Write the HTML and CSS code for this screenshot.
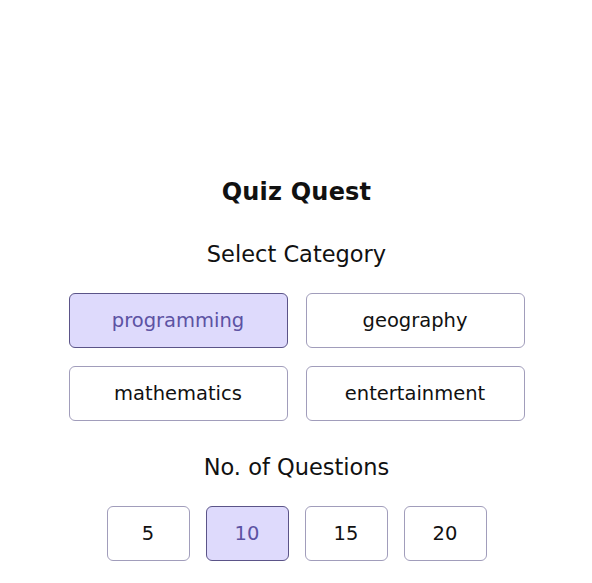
FILE: index.html
```html
<!DOCTYPE html>
<html>
<head>
<meta charset="utf-8">
<link rel="stylesheet" href="styles.css">
</head>
<body>
<main class="app">
  <h1 class="title">Quiz Quest</h1>
  <h2 class="subtitle">Select Category</h2>
  <div class="categories">
    <button class="opt selected">programming</button>
    <button class="opt">geography</button>
    <button class="opt">mathematics</button>
    <button class="opt">entertainment</button>
  </div>
  <h2 class="subtitle sub2">No. of Questions</h2>
  <div class="counts">
    <button class="opt num">5</button>
    <button class="opt num selected">10</button>
    <button class="opt num">15</button>
    <button class="opt num">20</button>
  </div>
</main>
</body>
</html>
```
FILE: styles.css
```css
html, body { margin: 0; padding: 0; background: #fff; }
body { font-family: "DejaVu Sans", "Noto Sans", sans-serif; color: #111; }
.app { display: flex; flex-direction: column; align-items: center; padding-top: 176px; padding-left: 1px; }
.title { margin: 0; font-size: 24px; font-weight: 700; line-height: 32px; letter-spacing: 0.2px; }
.subtitle { margin: 32px 0 0; font-size: 22.5px; font-weight: 400; line-height: 28px; }
.categories { margin-top: 25px; display: grid; grid-template-columns: 219px 219px; gap: 18px; }
.opt { height: 55px; border: 1px solid #a19dbb; border-radius: 6px; background: #fff; font-family: inherit; font-size: 19.5px; color: #111; padding: 0; }
.opt.selected { background: #dedafc; border-color: #5b5488; color: #5c52a3; }
.sub2 { margin-top: 32px; }
.counts { margin-top: 25px; display: flex; gap: 16px; }
.num { width: 83px; }
```
